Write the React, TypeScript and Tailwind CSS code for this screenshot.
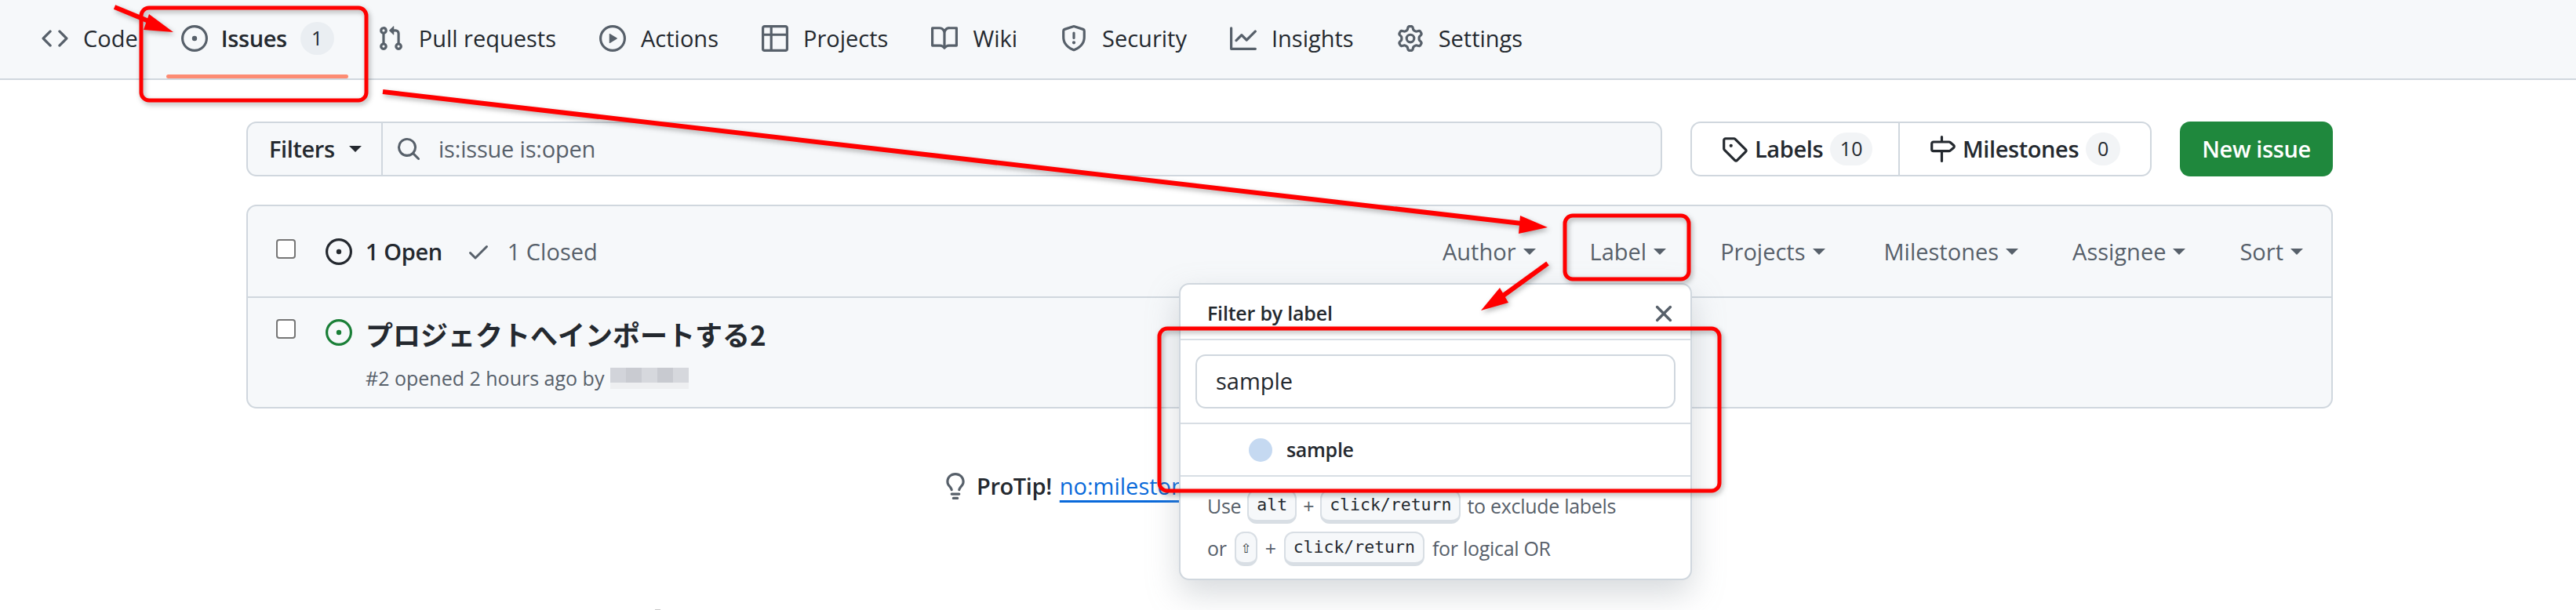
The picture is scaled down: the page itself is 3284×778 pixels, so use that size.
import type { ReactNode } from 'react'

const paths: Record<string, string> = {
  code: 'm11.28 3.22 4.25 4.25a.75.75 0 0 1 0 1.06l-4.25 4.25a.749.749 0 0 1-1.275-.326.749.749 0 0 1 .215-.734L13.94 8l-3.72-3.72a.749.749 0 0 1 .326-1.275.749.749 0 0 1 .734.215Zm-6.56 0a.751.751 0 0 1 1.042.018.751.751 0 0 1 .018 1.042L2.06 8l3.72 3.72a.749.749 0 0 1-.326 1.275.749.749 0 0 1-.734-.215L.47 8.53a.75.75 0 0 1 0-1.06Z',
  issue: 'M8 9.5a1.5 1.5 0 1 0 0-3 1.5 1.5 0 0 0 0 3ZM8 0a8 8 0 1 1 0 16A8 8 0 0 1 8 0ZM1.5 8a6.5 6.5 0 1 0 13 0 6.5 6.5 0 0 0-13 0Z',
  pull: 'M1.5 3.25a2.25 2.25 0 1 1 3 2.122v5.256a2.251 2.251 0 1 1-1.5 0V5.372A2.25 2.25 0 0 1 1.5 3.25Zm5.677-.177L9.573.677A.25.25 0 0 1 10 .854V2.5h1A2.5 2.5 0 0 1 13.5 5v5.628a2.251 2.251 0 1 1-1.5 0V5a1 1 0 0 0-1-1h-1v1.646a.25.25 0 0 1-.427.177L7.177 3.427a.25.25 0 0 1 0-.354ZM3.75 2.5a.75.75 0 1 0 0 1.5.75.75 0 0 0 0-1.5Zm0 9.5a.75.75 0 1 0 0 1.5.75.75 0 0 0 0-1.5Zm8.25.75a.75.75 0 1 0 1.5 0 .75.75 0 0 0-1.5 0Z',
  play: 'M8 0a8 8 0 1 1 0 16A8 8 0 0 1 8 0ZM1.5 8a6.5 6.5 0 1 0 13 0 6.5 6.5 0 0 0-13 0Zm4.879-2.773 4.264 2.559a.25.25 0 0 1 0 .428l-4.264 2.559A.25.25 0 0 1 6 10.559V5.442a.25.25 0 0 1 .379-.215Z',
  table: 'M0 1.75C0 .784.784 0 1.75 0h12.5C15.216 0 16 .784 16 1.75v12.5A1.75 1.75 0 0 1 14.25 16H1.75A1.75 1.75 0 0 1 0 14.25ZM6.5 6.5v8h7.75a.25.25 0 0 0 .25-.25V6.5Zm8-1.5V1.75a.25.25 0 0 0-.25-.25H6.5V5Zm-13 1.5v7.75c0 .138.112.25.25.25H5v-8ZM5 5V1.5H1.75a.25.25 0 0 0-.25.25V5Z',
  book: 'M0 1.75A.75.75 0 0 1 .75 1h4.253c1.227 0 2.317.59 3 1.501A3.743 3.743 0 0 1 11.006 1h4.245a.75.75 0 0 1 .75.75v10.5a.75.75 0 0 1-.75.75h-4.507a2.25 2.25 0 0 0-1.591.659l-.622.621a.75.75 0 0 1-1.06 0l-.622-.621A2.25 2.25 0 0 0 5.258 13H.75a.75.75 0 0 1-.75-.75Zm7.251 10.324.004-5.073-.002-2.253A2.25 2.25 0 0 0 5.003 2.5H1.5v9h3.757a3.75 3.75 0 0 1 1.994.574ZM8.755 4.75l-.004 7.322a3.752 3.752 0 0 1 1.992-.572H14.5v-9h-3.495a2.25 2.25 0 0 0-2.25 2.25Z',
  shield: 'M7.467.133a1.748 1.748 0 0 1 1.066 0l5.25 1.68A1.75 1.75 0 0 1 15 3.48V7c0 1.566-.32 3.182-1.303 4.682-.983 1.498-2.585 2.813-5.032 3.855a1.697 1.697 0 0 1-1.33 0c-2.447-1.042-4.049-2.357-5.032-3.855C1.32 10.182 1 8.566 1 7V3.48a1.75 1.75 0 0 1 1.217-1.667Zm.61 1.429a.25.25 0 0 0-.153 0l-5.25 1.68a.25.25 0 0 0-.174.238V7c0 1.358.275 2.666 1.057 3.86.784 1.194 2.121 2.34 4.366 3.297a.196.196 0 0 0 .154 0c2.245-.956 3.582-2.104 4.366-3.298C13.225 9.666 13.5 8.36 13.5 7V3.48a.251.251 0 0 0-.174-.237l-5.25-1.68ZM8.75 4.75v3a.75.75 0 0 1-1.5 0v-3a.75.75 0 0 1 1.5 0ZM9 10.5a1 1 0 1 1-2 0 1 1 0 0 1 2 0Z',
  graph: 'M1.5 1.75V13.5h13.75a.75.75 0 0 1 0 1.5H.75a.75.75 0 0 1-.75-.75V1.75a.75.75 0 0 1 1.5 0Zm14.28 2.53-5.25 5.25a.75.75 0 0 1-1.06 0L7 7.06 4.28 9.78a.751.751 0 0 1-1.042-.018.751.751 0 0 1-.018-1.042l3.25-3.25a.75.75 0 0 1 1.06 0L10 7.94l4.72-4.72a.751.751 0 0 1 1.042.018.751.751 0 0 1 .018 1.042Z',
  gear: 'M8 0a8.2 8.2 0 0 1 .701.031C9.444.095 9.99.645 10.16 1.29l.288 1.107c.018.066.079.158.212.224.231.114.454.243.668.386.123.082.233.09.299.071l1.103-.303c.644-.176 1.392.021 1.82.63.27.385.506.792.704 1.218.315.675.111 1.422-.364 1.891l-.814.806c-.049.048-.098.147-.088.294.016.257.016.515 0 .772-.01.147.038.246.088.294l.814.806c.475.469.679 1.216.364 1.891a7.977 7.977 0 0 1-.704 1.217c-.428.61-1.176.807-1.82.63l-1.102-.302c-.067-.019-.177-.011-.3.071a5.909 5.909 0 0 1-.668.386c-.133.066-.194.158-.211.224l-.29 1.106c-.168.646-.715 1.196-1.458 1.26a8.006 8.006 0 0 1-1.402 0c-.743-.064-1.289-.614-1.458-1.26l-.289-1.106c-.018-.066-.079-.158-.212-.224a5.738 5.738 0 0 1-.668-.386c-.123-.082-.233-.09-.299-.071l-1.103.303c-.644.176-1.392-.021-1.82-.63a8.12 8.12 0 0 1-.704-1.218c-.315-.675-.111-1.422.363-1.891l.815-.806c.05-.048.098-.147.088-.294a6.214 6.214 0 0 1 0-.772c.01-.147-.038-.246-.088-.294l-.815-.806C.635 6.045.431 5.298.746 4.623a7.92 7.92 0 0 1 .704-1.217c.428-.61 1.176-.807 1.82-.63l1.102.302c.067.019.177.011.3-.071.214-.143.437-.272.668-.386.133-.066.194-.158.211-.224l.29-1.106C6.009.645 6.556.095 7.299.03 7.53.01 7.764 0 8 0Zm-.571 1.525c-.036.003-.108.036-.137.146l-.289 1.105c-.147.561-.549.967-.998 1.189-.173.086-.34.183-.5.29-.417.278-.97.423-1.529.27l-1.103-.303c-.109-.03-.175.016-.195.045-.22.312-.412.644-.573.99-.014.031-.021.11.059.19l.815.806c.411.406.562.957.53 1.456a4.709 4.709 0 0 0 0 .582c.032.499-.119 1.05-.53 1.456l-.815.806c-.081.08-.073.159-.059.19.162.346.353.677.573.989.02.03.085.076.195.046l1.102-.303c.56-.153 1.113-.008 1.53.27.161.107.328.204.501.29.447.222.85.629.997 1.189l.289 1.105c.029.109.101.143.137.146a6.6 6.6 0 0 0 1.142 0c.036-.003.108-.036.137-.146l.289-1.105c.147-.561.549-.967.998-1.189.173-.086.34-.183.5-.29.417-.278.97-.423 1.529-.27l1.103.303c.109.029.175-.016.195-.045.22-.313.411-.644.573-.99.014-.031.021-.11-.059-.19l-.815-.806c-.411-.406-.562-.957-.53-1.456a4.709 4.709 0 0 0 0-.582c-.032-.499.119-1.05.53-1.456l.815-.806c.081-.08.073-.159.059-.19a6.464 6.464 0 0 0-.573-.989c-.02-.03-.085-.076-.195-.046l-1.102.303c-.56.153-1.113.008-1.53-.27a4.44 4.44 0 0 0-.501-.29c-.447-.222-.85-.629-.997-1.189l-.289-1.105c-.029-.11-.101-.143-.137-.146a6.6 6.6 0 0 0-1.142 0ZM11 8a3 3 0 1 1-6 0 3 3 0 0 1 6 0ZM9.5 8a1.5 1.5 0 1 0-3.001.001A1.5 1.5 0 0 0 9.5 8Z',
  search: 'M10.68 11.74a6 6 0 0 1-7.922-8.982 6 6 0 0 1 8.982 7.922l3.04 3.04a.749.749 0 0 1-.326 1.275.749.749 0 0 1-.734-.215ZM11.5 7a4.499 4.499 0 1 0-8.997 0A4.499 4.499 0 0 0 11.5 7Z',
  tag: 'M1 7.775V2.75C1 1.784 1.784 1 2.75 1h5.025c.464 0 .91.184 1.238.513l6.25 6.25a1.75 1.75 0 0 1 0 2.474l-5.026 5.026a1.75 1.75 0 0 1-2.474 0l-6.25-6.25A1.752 1.752 0 0 1 1 7.775Zm1.5 0c0 .066.026.13.073.177l6.25 6.25a.25.25 0 0 0 .354 0l5.025-5.025a.25.25 0 0 0 0-.354l-6.25-6.25a.25.25 0 0 0-.177-.073H2.75a.25.25 0 0 0-.25.25ZM6 5a1 1 0 1 1 0 2 1 1 0 0 1 0-2Z',
  milestone: 'M7.75 0a.75.75 0 0 1 .75.75V3h3.634c.414 0 .814.147 1.13.414l2.07 1.75a1.75 1.75 0 0 1 0 2.672l-2.07 1.75a1.75 1.75 0 0 1-1.13.414H8.5v5.25a.75.75 0 0 1-1.5 0V10H2.75A1.75 1.75 0 0 1 1 8.25v-3.5C1 3.784 1.784 3 2.75 3H7V.75A.75.75 0 0 1 7.75 0Zm4.384 8.5a.25.25 0 0 0 .161-.06l2.07-1.75a.248.248 0 0 0 0-.38l-2.07-1.75a.25.25 0 0 0-.161-.06H2.75a.25.25 0 0 0-.25.25v3.5c0 .138.112.25.25.25h9.384Z',
  check: 'M13.78 4.22a.75.75 0 0 1 0 1.06l-7.25 7.25a.75.75 0 0 1-1.06 0L2.22 9.28a.751.751 0 0 1 .018-1.042.751.751 0 0 1 1.042-.018L6 10.94l6.72-6.72a.75.75 0 0 1 1.06 0Z',
  x: 'M3.72 3.72a.75.75 0 0 1 1.06 0L8 6.94l3.22-3.22a.749.749 0 0 1 1.275.326.749.749 0 0 1-.215.734L9.06 8l3.22 3.22a.749.749 0 0 1-.326 1.275.749.749 0 0 1-.734-.215L8 9.06l-3.22 3.22a.751.751 0 0 1-1.042-.018.751.751 0 0 1-.018-1.042L6.94 8 3.72 4.78a.75.75 0 0 1 0-1.06Z',
  bulb: 'M8 1.5c-2.363 0-4 1.69-4 3.75 0 .984.424 1.625.984 2.304l.214.253c.223.264.47.556.673.848.284.411.537.896.621 1.49a.75.75 0 0 1-1.484.211c-.04-.282-.163-.547-.37-.847a8.456 8.456 0 0 0-.542-.68c-.084-.1-.173-.205-.268-.32C3.201 7.75 2.5 6.766 2.5 5.25 2.5 2.31 4.863 0 8 0s5.5 2.31 5.5 5.25c0 1.516-.701 2.5-1.328 3.259-.095.115-.184.22-.268.319-.207.245-.383.453-.541.681-.208.3-.33.565-.37.847a.751.751 0 0 1-1.485-.212c.084-.593.337-1.078.621-1.489.203-.292.45-.584.673-.848.075-.088.147-.173.213-.253.561-.679.985-1.32.985-2.304 0-2.06-1.637-3.75-4-3.75ZM5.75 12h4.5a.75.75 0 0 1 0 1.5h-4.5a.75.75 0 0 1 0-1.5ZM6 15.25a.75.75 0 0 1 .75-.75h2.5a.75.75 0 0 1 0 1.5h-2.5a.75.75 0 0 1-.75-.75Z',
}

function Icon({ name, className }: { name: string; className?: string }) {
  return (
    <svg viewBox="0 0 16 16" fill="currentColor" className={`shrink-0 ${className ?? 'w-[34px] h-[34px]'}`}>
      <path fillRule="evenodd" d={paths[name]} />
    </svg>
  )
}

function Caret() {
  return <span className="inline-block w-0 h-0 border-x-[8px] border-t-[8px] border-x-transparent border-t-current" />
}

function Kbd({ children, className }: { children: ReactNode; className?: string }) {
  return (
    <span className={`inline-flex items-center justify-center h-[44px] rounded-[12px] bg-[#f6f8fa] border-2 border-b-[5px] border-[#d8dee4] text-[#24292f] text-[21.5px] tracking-normal font-['DejaVu_Sans_Mono','Liberation_Mono',monospace] ${className ?? 'px-[10px]'}`}>
      {children}
    </span>
  )
}

function Counter({ children, className }: { children: ReactNode; className?: string }) {
  return (
    <span className={`flex items-center justify-center h-[42px] rounded-full text-[25px] text-[#24292f] font-normal tracking-normal ${className ?? ''}`}>
      {children}
    </span>
  )
}

const tabs = [
  { icon: 'code', label: 'Code' },
  { icon: 'issue', label: 'Issues', count: 1, active: true },
  { icon: 'pull', label: 'Pull requests' },
  { icon: 'play', label: 'Actions' },
  { icon: 'table', label: 'Projects' },
  { icon: 'book', label: 'Wiki' },
  { icon: 'shield', label: 'Security' },
  { icon: 'graph', label: 'Insights' },
  { icon: 'gear', label: 'Settings' },
]

const issueFilters = [
  { label: 'Author', className: '' },
  { label: 'Label', className: '' },
  { label: 'Projects', className: '' },
  { label: 'Milestones', className: 'ml-[6px]' },
  { label: 'Assignee', className: '' },
  { label: 'Sort', className: '' },
]

const blurColors = ['#d2d4da', '#c9cbd1', '#d6d8dd', '#c8cad0', '#d6d8dd']

export default function App() {
  return (
    <div className="relative h-[778px] w-[3284px] overflow-hidden bg-white text-[#24292f] text-[29px] font-['Open_Sans','Noto_Sans_CJK_JP',sans-serif]">
      {/* Repo nav */}
      <nav className="flex h-[102px] items-start gap-[55px] border-b-2 border-[#d0d7de] bg-[#f6f8fa] pl-[53px]">
        {tabs.map((tab) => (
          <a key={tab.label} className={`relative flex h-[100px] items-center pb-[2px] ${tab.active ? 'gap-[17px]' : 'gap-[19px]'}`}>
            <span className="text-[#57606a]"><Icon name={tab.icon} /></span>
            <span className={tab.active ? 'font-semibold tracking-[-0.4px]' : ''}>{tab.label}</span>
            {tab.count && <Counter className="w-[43px] bg-[#eaeef2]">{tab.count}</Counter>}
            {tab.active && (
              <span className="absolute left-[-19px] right-[-18px] bottom-[0px] h-[5px] rounded-[3px] bg-[#fd8c73]" />
            )}
          </a>
        ))}
      </nav>

      <main className="pl-[314px] pr-[310px]">
        {/* Search row */}
        <div className="mt-[53px] flex h-[70px] gap-[36px]">
          <div className="flex flex-1 rounded-[13px] border-2 border-[#d0d7de] bg-[#f6f8fa]">
            <div className="flex w-[172px] items-center gap-[18px] border-r-2 border-[#d0d7de] pl-[27px] font-semibold tracking-[-0.4px]">
              Filters <Caret />
            </div>
            <div className="flex items-center gap-[22px] pl-[17px] text-[#57606a] tracking-[-0.2px]">
              <Icon name="search" className="w-[32px] h-[32px]" />
              <span>is:issue is:open</span>
            </div>
          </div>
          <div className="flex rounded-[13px] border-2 border-[#d0d7de] font-semibold tracking-[-0.4px]">
            <div className="flex w-[265px] items-center gap-[9px] border-r-2 border-[#d0d7de] pl-[37px]">
              <Icon name="tag" />
              Labels
              <Counter className="w-[54px] bg-[#f2f4f6]">10</Counter>
            </div>
            <div className="flex w-[319px] items-center gap-[9px] pl-[37px]">
              <Icon name="milestone" />
              Milestones
              <Counter className="w-[44px] bg-[#f2f4f6]">0</Counter>
            </div>
          </div>
          <button className="w-[195px] rounded-[13px] bg-[#1f883d] font-semibold tracking-[-0.4px] text-white">New issue</button>
        </div>

        {/* Issue list */}
        <div className="mt-[36px] rounded-[13px] border-2 border-[#d0d7de] bg-[#f6f8fa]">
          <div className="flex h-[117px] items-center justify-between border-b-2 border-[#d0d7de] pl-[36px] pr-[36px]">
            <div className="flex items-center">
              <span className="mb-[6px] h-[25px] w-[25px] rounded-[4px] border-2 border-[#767676] bg-white" />
              <span className="ml-[38px] flex items-center gap-[17px] font-semibold tracking-[-0.4px]">
                <Icon name="issue" />
                1 Open
              </span>
              <span className="ml-[30px] flex items-center gap-[21px] text-[#57606a]">
                <Icon name="check" className="w-[32px] h-[32px]" />
                1 Closed
              </span>
            </div>
            <div className="flex items-center gap-[69px] text-[#57606a]">
              {issueFilters.map((f) => (
                <span key={f.label} className={`flex items-center gap-[9px] ${f.className}`}>
                  {f.label} <Caret />
                </span>
              ))}
            </div>
          </div>
          <div className="flex h-[139px] items-start pl-[36px] pt-[27px]">
            <span className="h-[25px] w-[25px] rounded-[4px] border-2 border-[#767676] bg-white" />
            <span className="ml-[38px] text-[#1a7f37]"><Icon name="issue" /></span>
            <div className="ml-[17px]">
              <div className="text-[35px] leading-[38px] font-bold font-['Noto_Sans_CJK_JP',sans-serif]">プロジェクトへインポートする2</div>
              <div className="mt-[24px] flex h-[27px] items-center gap-[8px] text-[25px] text-[#57606a]">
                #2 opened 2 hours ago by
                <span className="flex">
                  {blurColors.map((c, i) => (
                    <span key={i} className="flex h-[27px] w-[20px] flex-col">
                      <span className="h-[19px]" style={{ backgroundColor: c }} />
                      <span className="h-[8px] bg-[#eeeff1]" />
                    </span>
                  ))}
                </span>
              </div>
            </div>
          </div>
        </div>

        {/* Pro tip, the link runs in behind the dropdown */}
        <div className="mt-[77px] flex items-center gap-[10px] pl-[887px]">
          <span className="text-[#57606a]"><Icon name="bulb" /></span>
          <span className="font-semibold tracking-[-0.4px]">ProTip!</span>
          <a className="whitespace-nowrap text-[#0969da] underline decoration-[3px] underline-offset-[7px]">no:milestone</a>
        </div>
      </main>

      {/* Label dropdown */}
      <div className="absolute left-[1503px] top-[361px] w-[654px] h-[379px] rounded-[13px] border-2 border-[#d0d7de] bg-white shadow-[0_17px_40px_rgba(140,149,159,0.35)]">
        <div className="flex h-[71px] items-center justify-between border-b-2 border-[#d8dee4] pl-[34px] pr-[16px] pt-[4px] text-[25px] font-semibold tracking-[-0.2px]">
          Filter by label
          <span className="text-[#57606a]"><Icon name="x" className="w-[36px] h-[36px]" /></span>
        </div>
        <div className="h-[107px] border-b-2 border-[#d8dee4] px-[19px] pt-[18px]">
          <div className="flex h-[69px] items-center rounded-[13px] border-2 border-[#d0d7de] pl-[24px] pb-[2px]">sample</div>
        </div>
        <div className="flex h-[67px] items-center gap-[18px] border-b-2 border-[#d8dee4] pl-[87px] text-[25px] font-semibold tracking-[-0.3px]">
          <span className="h-[30px] w-[30px] rounded-full bg-[#c5d9f1]" />
          sample
        </div>
        <div className="flex flex-col gap-[10px] pl-[34px] pt-[16px] text-[25px] text-[#57606a] tracking-[-0.3px]">
          <div className="flex items-center gap-[8px]">
            Use <Kbd>alt</Kbd> + <Kbd>click/return</Kbd> to exclude labels
          </div>
          <div className="flex items-center gap-[10px]">
            or <Kbd className="px-[6px]">⇧</Kbd> + <Kbd>click/return</Kbd> for logical OR
          </div>
        </div>
      </div>

      {/* Red annotations drawn over the screenshot */}
      <svg className="absolute inset-0 h-full w-full" viewBox="0 0 3284 778" fill="none">
        <g className="drop-shadow-[2px_3px_3px_rgba(0,0,0,0.3)]">
          <rect x="180" y="10" width="287" height="118" rx="10" stroke="#ff0000" strokeWidth="5" />
          <rect x="1995" y="275" width="158" height="81" rx="10" stroke="#ff0000" strokeWidth="5" />
          <rect x="1478" y="419" width="714" height="207" rx="10" stroke="#ff0000" strokeWidth="5" />
          <path d="M146 9 L192 28" stroke="#ff0000" strokeWidth="6" />
          <polygon points="221,41 190,18 183,38" fill="#ff0000" />
          <path d="M488 117 L1940 285" stroke="#ff0000" strokeWidth="6" />
          <polygon points="1973,290 1938,275 1936,298" fill="#ff0000" />
          <path d="M1973 336 L1915 378" stroke="#ff0000" strokeWidth="6" />
          <polygon points="1888,396 1912,367 1923,386" fill="#ff0000" />
        </g>
      </svg>

      <span className="absolute left-[835px] bottom-0 h-px w-[7px] bg-[#c8c8c8]" />
    </div>
  )
}
